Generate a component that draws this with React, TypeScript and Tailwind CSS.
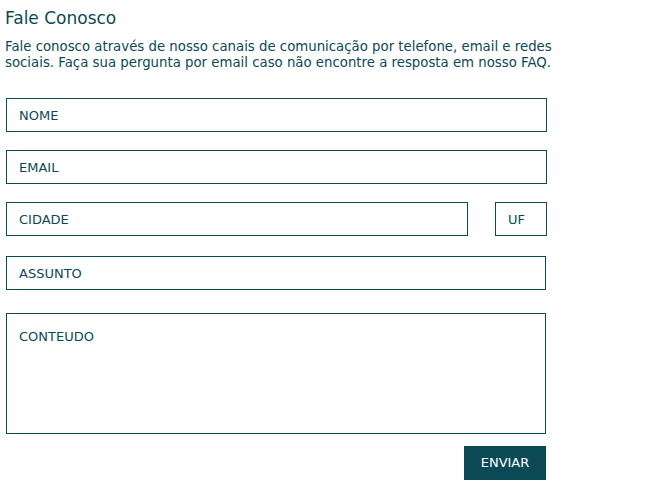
const ink = "text-[#0b4a55]";

function Field({ label, className }: { label: string; className: string }) {
  return (
    <input
      placeholder={label}
      className={`h-[34px] border border-[#0b4a55] bg-white px-3 text-[13px] ${ink} placeholder:text-[#0b4a55] outline-none ${className}`}
    />
  );
}

export default function App() {
  return (
    <div className="h-[500px] w-[650px] bg-white font-['DejaVu_Sans',sans-serif]">
      <div className="px-[5px] pt-[7px]">
        <h1 className={`text-[17px] leading-[22px] ${ink}`}>Fale Conosco</h1>
        <p className={`mt-[10px] text-[13.3px] leading-[16px] ${ink}`}>
          Fale conosco através de nosso canais de comunicação por telefone, email e redes
          <br />
          sociais. Faça sua pergunta por email caso não encontre a resposta em nosso FAQ.
        </p>
      </div>

      {/* FORMULARIO */}
      <form className="ml-[6px] mt-[27px] flex w-[541px] flex-col">
        <Field label="NOME" className="w-[541px]" />
        <Field label="EMAIL" className="mt-[18px] w-[541px]" />
        <div className="mt-[18px] flex justify-between">
          <Field label="CIDADE" className="w-[462px]" />
          <Field label="UF" className="w-[52px]" />
        </div>
        <Field label="ASSUNTO" className="mt-[20px] w-[540px]" />
        <textarea
          placeholder="CONTEUDO"
          className={`mt-[23px] h-[121px] w-[540px] resize-none border border-[#0b4a55] px-3 pt-[13px] text-[13px] ${ink} placeholder:text-[#0b4a55] outline-none`}
        />
        <div className="mt-[12px] flex w-[540px] justify-end">
          <button
            type="button"
            className="h-[34px] w-[82px] bg-[#0b4a55] text-[13px] text-white"
          >
            ENVIAR
          </button>
        </div>
      </form>
    </div>
  );
}
